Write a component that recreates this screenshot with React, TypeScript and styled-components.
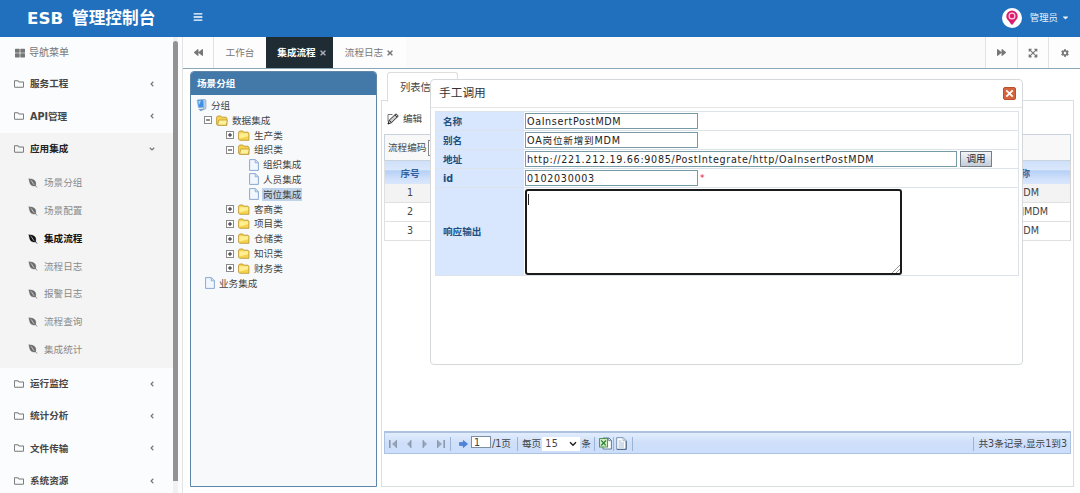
import React from 'react';
import styled, { createGlobalStyle, css } from 'styled-components';
import {
  FaAngleDown,
  FaAngleLeft,
  FaBackward,
  FaBars,
  FaCaretDown,
  FaCog,
  FaEnvira,
  FaExpandArrowsAlt,
  FaForward,
  FaRegFolder,
  FaThLarge,
  FaTimes,
} from 'react-icons/fa';

const GlobalStyle = createGlobalStyle`
  * { box-sizing: border-box; }
  body {
    margin: 0;
    background: #fff;
    color: #444;
    font: 9.6px/1.2 "DejaVu Sans", "Noto Sans CJK SC", sans-serif;
  }
  input, button, textarea { font-family: inherit; font-size: inherit; margin: 0; }
`;

/* ---------- shell ---------- */
const Page = styled.div`
  width: 1080px;
  height: 493px;
  display: flex;
  flex-direction: column;
  overflow: hidden;
`;
const Header = styled.header`
  height: 37px;
  flex: none;
  background: #2170bd;
  color: #fff;
  display: flex;
  align-items: center;
`;
const Brand = styled.h1`
  margin: 0;
  width: 182px;
  padding: 0 0 2px 27px;
  font-size: 16.7px;
  line-height: 20px;
  word-spacing: 3px;
  white-space: nowrap;
`;
const MenuToggle = styled.div`
  margin: -4px 0 0 11px;
  flex: 1;
  display: flex;
`;
const Account = styled.div`
  display: flex;
  align-items: center;
  gap: 8px;
  padding-right: 10px;
  margin-top: -2px;
`;
const AccountName = styled.span`
  display: flex;
  align-items: center;
  gap: 3px;
  font-size: 9.4px;
  color: #eaf2fa;
`;
const Body = styled.div`
  flex: 1;
  min-height: 0;
  display: flex;
`;

/* ---------- sidebar ---------- */
const Sidebar = styled.aside`
  width: 183px;
  flex: none;
  display: flex;
  background: #fafcfd;
  border-right: 1px solid #e3e3e3;
`;
const Nav = styled.nav`
  width: 173px;
  overflow: hidden;
`;
const Track = styled.div`
  width: 5px;
  height: 456px;
  padding-top: 4px;
  background: #f1f1f3;
`;
const Thumb = styled.div`
  height: 440px;
  border-radius: 3px 3px 0 0;
  background: #929294;
`;
const NavTitle = styled.div`
  height: 31px;
  display: flex;
  align-items: center;
  gap: 4px;
  padding-left: 15px;
  font-size: 10px;
  color: #777;
`;
const NavItem = styled.div<{ $open?: boolean }>`
  height: 32.3px;
  display: flex;
  align-items: center;
  gap: 6px;
  padding: 0 17px 0 14px;
  font-weight: bold;
  color: ${(p) => (p.$open ? '#222' : '#454545')};
  svg { color: #777; }
`;
const NavLabel = styled.span`
  flex: 1;
`;
const NavGroup = styled.div`
  background: #f4f4f4;
  height: 235px;
`;
const SubItem = styled.div<{ $active?: boolean }>`
  height: 27.7px;
  display: flex;
  align-items: center;
  gap: 6px;
  padding: 9px 0 0 28px;
  color: ${(p) => (p.$active ? '#111' : '#8a8a8a')};
  font-weight: ${(p) => (p.$active ? 'bold' : 'normal')};
  svg {
    color: ${(p) => (p.$active ? '#111' : '#6c6c6c')};
    stroke: currentColor;
    stroke-width: 8px;
  }
`;

/* ---------- main ---------- */
const Main = styled.main`
  flex: 1;
  min-width: 0;
  display: flex;
  flex-direction: column;
`;
const TabBar = styled.div`
  height: 32px;
  flex: none;
  display: flex;
  background: #fafafa;
  border-bottom: 1px solid #88a7b8;
  color: #666;
`;
const TabButton = styled.div<{ $w: number; $active?: boolean; $side?: 'left' | 'right' }>`
  width: ${(p) => p.$w}px;
  display: flex;
  align-items: center;
  justify-content: center;
  gap: 3px;
  background: #fdfdfd;
  color: #777;
  ${(p) => p.$side === 'left' && css`border-right: 1px solid #e2e2e2;`}
  ${(p) => p.$side === 'right' && css`border-left: 1px solid #e2e2e2;`}
  ${(p) => p.$active && css`padding-left: 5px; background: #1f2c33; color: #fff; font-weight: bold; svg { color: #aab; }`}
`;
const Spacer = styled.div`
  flex: 1;
`;
const Workspace = styled.div`
  flex: 1;
  display: flex;
  padding: 2px 6px 6px 7px;
  position: relative;
`;

/* ---------- tree ---------- */
const TreePanel = styled.section`
  width: 187px;
  height: 416px;
  border: 1px solid #5f86a8;
  border-radius: 4px 4px 0 0;
  background: #f8f9fb;
  overflow: hidden;
`;
const TreeTitle = styled.div`
  height: 23px;
  padding: 1px 0 0 6px;
  display: flex;
  align-items: center;
  background: #4379a9;
  color: #fff;
  font-weight: bold;
`;
const TreeBody = styled.div`
  padding: 3px 0 0 5px;
`;
const TreeRow = styled.div<{ $indent: number }>`
  height: 14.82px;
  display: flex;
  align-items: center;
  padding-left: ${(p) => p.$indent}px;
  gap: 4px;
  svg { flex: none; }
`;
const TreeLabel = styled.span<{ $selected?: boolean }>`
  padding: 1px;
  margin-left: -1px;
  line-height: 11px;
  background: ${(p) => (p.$selected ? '#bfd3ea' : 'none')};
`;

/* ---------- list ---------- */
const ListArea = styled.section`
  margin-left: 4px;
  width: 693px;
  display: flex;
  flex-direction: column;
`;
const ListTabs = styled.div`
  height: 29px;
  padding: 1px 0 0 6px;
`;
const ListTab = styled.div`
  width: 71px;
  height: 30px;
  position: relative;
  border: 1px solid #ddd;
  border-bottom: 0;
  border-radius: 3px 3px 0 0;
  background: #fff;
  display: flex;
  align-items: center;
  padding-left: 12px;
  font-size: 10.3px;
`;
const ListBody = styled.div`
  height: 387px;
  border: 1px solid #d9dfe0;
  padding: 0 1px 0 2px;
  display: flex;
  flex-direction: column;
`;
const Toolbar = styled.div`
  height: 33px;
  display: flex;
  align-items: center;
  gap: 4px;
  padding: 3px 0 0 3px;
`;
const SearchRow = styled.div`
  height: 27px;
  display: flex;
  align-items: center;
  gap: 2px;
  padding-left: 3px;
  border: 1px solid #c9d3dd;
  background: #f8f8f8;
  margin-right: 1px;
`;
const SearchBox = styled.input`
  width: 100px;
  height: 16px;
  border: 1px solid #888;
`;
const Grid = styled.div`
  width: 687px;
  border-left: 1px solid #e0e0e0;
  border-right: 1px solid #d5d5d5;
`;
const GridRow = styled.div<{ $kind?: 'head' | 'odd' }>`
  display: flex;
  height: 19px;
  align-items: center;
  border-bottom: 1px solid #e0e0e0;
  background: ${(p) => (p.$kind === 'odd' ? '#f3f3f3' : '#fff')};
  ${(p) =>
    p.$kind === 'head' &&
    css`
      height: 23px;
      padding-top: 2px;
      border: 0;
      color: #33639c;
      font-weight: bold;
      background: linear-gradient(#cfe0fa, #dbe8fc 40%, #b4cff6 42%, #cfe0fb 75%, #d9e7fc);
    `}
`;
const IndexCell = styled.div`
  width: 50px;
  text-align: center;
`;
const NameCell = styled.div<{ $right: number }>`
  flex: 1;
  text-align: right;
  padding-right: ${(p) => p.$right}px;
`;

/* ---------- pager ---------- */
const Pager = styled.footer`
  margin: auto 1px 32px 0;
  height: 23px;
  flex: none;
  display: flex;
  align-items: center;
  padding: 1px 3px 0 3px;
  border: 1px solid #adc2de;
  border-top-width: 2px;
  background: linear-gradient(#e2edfd, #cfdff9 50%, #cbdefc);
`;
const PagerIcons = styled.div`
  display: flex;
  gap: 6px;
  width: 62px;
`;
const Divider = styled.i<{ $before: number; $after: number }>`
  width: 1px;
  height: 14px;
  background: #9cb4d4;
  margin: 0 ${(p) => p.$after}px 0 ${(p) => p.$before}px;
`;
const PageInput = styled.input`
  width: 20px;
  height: 12px;
  margin: -3px 1px 0 3px;
  padding: 0 2px;
  border: 1px solid #7d8ea0;
  color: #444;
`;
const PageSize = styled.div`
  width: 38px;
  height: 14px;
  margin: 1px 1px 0 1px;
  padding: 0 3px;
  background: #fff;
  display: flex;
  align-items: center;
  justify-content: space-between;
  letter-spacing: 0.4px;
`;

/* ---------- dialog ---------- */
const Dialog = styled.div`
  position: absolute;
  left: 247px;
  top: 10px;
  width: 593px;
  height: 286px;
  background: #fff;
  border: 1px solid #d6d9dc;
  border-radius: 4px;
  padding: 0 3px 0 4px;
`;
const DialogHead = styled.div`
  height: 28px;
  margin: 0 -3px 3px -4px;
  padding: 0 6px 1px 8px;
  display: flex;
  align-items: center;
  justify-content: space-between;
  border-bottom: 1px solid #e6e6e6;
  font-size: 11.7px;
  color: #333;
`;
const Form = styled.div`
  border: 1px solid #dde3e8;
  border-bottom: 0;
`;
const FormRow = styled.label<{ $h: number }>`
  height: ${(p) => p.$h}px;
  display: flex;
  border-bottom: 1px solid #dde3ea;
`;
const FormLabel = styled.span`
  width: 88px;
  padding: 1px 0 0 7px;
  display: flex;
  align-items: center;
  background: #d8e7fd;
  color: #214f7f;
  font-weight: bold;
`;
const FormField = styled.span`
  flex: 1;
  display: flex;
  align-items: center;
  padding-left: 1px;
  gap: 3px;
`;
const TextInput = styled.input<{ $w: number; $spacing?: number }>`
  width: ${(p) => p.$w}px;
  height: 16px;
  padding: 0 1px;
  border: 1px solid #769ba6;
  color: #222;
  letter-spacing: ${(p) => p.$spacing ?? 0.67}px;
`;
const Required = styled.em`
  color: #e02020;
  font-style: normal;
  font-size: 9px;
  margin-left: -1px;
`;
const InvokeButton = styled.button`
  width: 32px;
  height: 16px;
  padding: 0;
  line-height: 12px;
  border: 1px solid #73808c;
  background: linear-gradient(#f3f5f7, #c3ccd6);
  color: #222;
`;
const Output = styled.div`
  width: 377px;
  height: 86px;
  padding: 3px 1px;
  border: 2px solid #1b1b1b;
  border-radius: 3px;
  background: #fff;
  display: flex;
  justify-content: space-between;
`;
const Caret = styled.i`
  width: 1px;
  height: 11px;
  background: #222;
`;
const Grip = styled.svg`
  align-self: flex-end;
  margin: 0 -1px -3px 0;
`;

/* ---------- drawings ---------- */
const Pin = () => (
  <svg width="20" height="20" viewBox="0 0 20 20">
    <circle cx="10" cy="10" r="10" fill="#fff" />
    <path d="M10 2.6a5.7 5.7 0 0 0-5.7 5.7c0 3.4 3.4 4.8 4.8 8.2h1.8c1.4-3.4 4.8-4.8 4.8-8.2A5.7 5.7 0 0 0 10 2.6z" fill="#dc1d6e" />
    <circle cx="10" cy="8" r="2.9" fill="#dc1d6e" stroke="#fbd3e2" strokeWidth="1.2" />
  </svg>
);
const Computer = () => (
  <svg width="11" height="13" viewBox="0 0 11 13">
    <path d="M1 1l6-.8 1 8L2.5 9z" fill="#3d8fe8" stroke="#9dbde0" strokeWidth=".7" />
    <path d="M7.3.3L10 1v8.5L7.5 11z" fill="#b8cbe3" stroke="#7894b8" strokeWidth=".5" />
    <path d="M2.5 10.2l4-.8 1 1.5-3 1.4z" fill="#7f9fc6" />
    <path d="M2.2 2l3-.5L3 6z" fill="#a5d4fb" />
  </svg>
);
const Expander = ({ open }: { open?: boolean }) => (
  <svg width="8" height="8" viewBox="0 0 8 8">
    <rect x=".5" y=".5" width="7" height="7" fill="#fff" stroke="#8a8a8a" />
    <path d={open ? 'M2 4h4' : 'M2 4h4M4 2v4'} stroke="#222" />
  </svg>
);
const Folder = ({ open }: { open?: boolean }) => (
  <svg width="12" height="11" viewBox="0 0 12 11">
    <path d="M.6 9.2V2.2L1.6 1h3.2l1 1.2H10l.9.9v7.2H1.6z" fill="#f6d34e" stroke="#b7902b" strokeWidth=".8" />
    {open ? (
      <path d="M2.8 5h8.6l-1.2 5.2H1.6z" fill="#fff19a" stroke="#b7902b" strokeWidth=".7" />
    ) : (
      <path d="M1.3 3.3h8.8v2.9l-8.8 2.4z" fill="#ffee92" />
    )}
  </svg>
);
const Doc = () => (
  <svg width="10" height="12" viewBox="0 0 10 12">
    <path d="M.6.6h5.8l3 3v7.8H.6z" fill="#f1f7ff" stroke="#7f9fc8" strokeWidth=".9" />
    <path d="M6.2.8v3h3" fill="#c9dcf5" stroke="#7f9fc8" strokeWidth=".7" />
  </svg>
);
const Pencil = () => (
  <svg width="12" height="12" viewBox="0 0 12 12">
    <path d="M5.5 1.5H1v7" fill="none" stroke="#777" />
    <path d="M1 11l1.2-3.8L9 .8 11.3 3 4.6 9.6z" fill="#ccc" stroke="#333" />
    <path d="M7.8 1.9l2.4 2.3M2.2 7.2l2.4 2.4" stroke="#333" />
    <path d="M.8 11.2l.7-2 1.4 1.3z" fill="#222" />
  </svg>
);
const CloseBox = () => (
  <svg width="13" height="13" viewBox="0 0 13 13">
    <rect x=".5" y=".5" width="12" height="12" rx="1.5" fill="#d6643d" stroke="#b9502f" />
    <path d="M3.3 3.3l6.4 6.4M9.7 3.3L3.3 9.7" stroke="#fff" strokeWidth="1.7" />
  </svg>
);
const Step = ({ flip, bar }: { flip?: boolean; bar?: boolean }) => (
  <svg width="10" height="10" viewBox="0 0 10 10">
    <g transform={flip ? 'translate(10 0) scale(-1 1)' : undefined}>
      <path d={bar ? 'M8.5 1v8L4 5z' : 'M7 1v8L3 5z'} fill="#96a5b8" />
      <path d={bar ? 'M8.5 1v8' : 'M7 1v8'} stroke="#7b8798" strokeWidth=".7" />
      {bar && <path d="M1.8 1v8" stroke="#8694a8" strokeWidth="1.5" />}
    </g>
  </svg>
);
const GoArrow = () => (
  <svg width="9" height="8" viewBox="0 0 9 8">
    <path d="M.5 2.5h3.8V.4L8.6 4 4.3 7.6V5.5H.5z" fill="#4b84dc" stroke="#2f62b8" strokeWidth=".5" />
  </svg>
);
const SheetIcon = ({ excel }: { excel?: boolean }) => (
  <svg width={excel ? 13 : 11} height="13" viewBox={excel ? '0 0 13 13' : '0 0 11 13'}>
    {excel ? (
      <>
        <path d="M4 1h6l2.4 2.4V12H4z" fill="#fff" stroke="#55708c" strokeWidth=".9" />
        <path d="M9.7 1v2.7h2.7" fill="none" stroke="#55708c" strokeWidth=".8" />
        <rect x=".6" y="1.6" width="8" height="8.4" fill="#d9efd0" stroke="#3f8a3b" strokeWidth=".9" />
        <path d="M2.2 3.4l4.6 5M7 3.4l-4.8 5" stroke="#2d8430" strokeWidth="1.4" />
      </>
    ) : (
      <>
        <path d="M.7.7h6.5l3 3v8.6H.7z" fill="#fff" stroke="#6c88a8" strokeWidth=".9" />
        <path d="M10.2 4v8.4H1" fill="none" stroke="#4d6785" strokeWidth="1" />
        <path d="M7 .8v3h3M2.5 4h3M2.5 6h5.5M2.5 8h5.5M2.5 10h5.5" fill="none" stroke="#8fa9c6" strokeWidth=".8" />
      </>
    )}
  </svg>
);
const Chevron = () => (
  <svg width="8" height="6" viewBox="0 0 8 6">
    <path d="M1 1.2l3 3 3-3" fill="none" stroke="#222" strokeWidth="1.5" />
  </svg>
);

const subItems = ['场景分组', '场景配置', '集成流程', '流程日志', '报警日志', '流程查询', '集成统计'];
const closedCategories = ['客商类', '项目类', '仓储类', '知识类', '财务类'];

const MenuEntry = ({ label, open }: { label: string; open?: boolean }) => (
  <NavItem $open={open}>
    <FaRegFolder size={10} />
    <NavLabel>{label}</NavLabel>
    {open ? <FaAngleDown size={8} /> : <FaAngleLeft size={8} />}
  </NavItem>
);

const Category = ({ label, open, indent = 24 }: { label: string; open?: boolean; indent?: number }) => (
  <TreeRow $indent={indent + 6}>
    <Expander open={open} />
    <Folder open={open} />
    <TreeLabel>{label}</TreeLabel>
  </TreeRow>
);

const Leaf = ({ label, indent = 53, selected }: { label: string; indent?: number; selected?: boolean }) => (
  <TreeRow $indent={indent}>
    <Doc />
    <TreeLabel $selected={selected}>{label}</TreeLabel>
  </TreeRow>
);

export default function App() {
  return (
    <Page>
      <GlobalStyle />
      <Header>
        <Brand>ESB 管理控制台</Brand>
        <MenuToggle><FaBars size={10} /></MenuToggle>
        <Account>
          <Pin />
          <AccountName>管理员 <FaCaretDown size={9} /></AccountName>
        </Account>
      </Header>
      <Body>
        <Sidebar>
          <Nav>
            <NavTitle><FaThLarge size={10} />导航菜单</NavTitle>
            <MenuEntry label="服务工程" />
            <MenuEntry label="API管理" />
            <NavGroup>
              <MenuEntry label="应用集成" open />
              {subItems.map((name) => (
                <SubItem key={name} $active={name === '集成流程'}>
                  <FaEnvira size={10} />
                  {name}
                </SubItem>
              ))}
            </NavGroup>
            <MenuEntry label="运行监控" />
            <MenuEntry label="统计分析" />
            <MenuEntry label="文件传输" />
            <MenuEntry label="系统资源" />
          </Nav>
          <Track><Thumb /></Track>
        </Sidebar>
        <Main>
          <TabBar>
            <TabButton $w={31} $side="left"><FaBackward size={9} /></TabButton>
            <TabButton $w={52}>工作台</TabButton>
            <TabButton $w={67} $active>集成流程<FaTimes size={8} /></TabButton>
            <TabButton $w={73}>流程日志<FaTimes size={8} /></TabButton>
            <Spacer />
            <TabButton $w={32} $side="right"><FaForward size={9} /></TabButton>
            <TabButton $w={31} $side="right"><FaExpandArrowsAlt size={10} /></TabButton>
            <TabButton $w={32} $side="right"><FaCog size={8} /></TabButton>
          </TabBar>
          <Workspace>
            <TreePanel>
              <TreeTitle>场景分组</TreeTitle>
              <TreeBody>
                <TreeRow $indent={0}><Computer /><TreeLabel>分组</TreeLabel></TreeRow>
                <Category label="数据集成" open indent={2} />
                <Category label="生产类" />
                <Category label="组织类" open />
                <Leaf label="组织集成" />
                <Leaf label="人员集成" />
                <Leaf label="岗位集成" selected />
                {closedCategories.map((name) => <Category key={name} label={name} />)}
                <Leaf label="业务集成" indent={9} />
              </TreeBody>
            </TreePanel>
            <ListArea>
              <ListTabs><ListTab>列表信息</ListTab></ListTabs>
              <ListBody>
                <Toolbar><Pencil />编辑</Toolbar>
                <SearchRow>流程编码<SearchBox readOnly /></SearchRow>
                <Grid>
                  <GridRow $kind="head"><IndexCell>序号</IndexCell><NameCell $right={40}>名称</NameCell></GridRow>
                  <GridRow $kind="odd"><IndexCell>1</IndexCell><NameCell $right={31}>新增到MDM</NameCell></GridRow>
                  <GridRow><IndexCell>2</IndexCell><NameCell $right={22}>OA岗位新增到MDM</NameCell></GridRow>
                  <GridRow><IndexCell>3</IndexCell><NameCell $right={31}>新增到MDM</NameCell></GridRow>
                </Grid>
                <Pager>
                  <PagerIcons><Step bar /><Step /><Step flip /><Step flip bar /></PagerIcons>
                  <Divider $before={0} $after={8} />
                  <GoArrow />
                  <PageInput readOnly value="1" />/1页
                  <Divider $before={6} $after={4} />
                  每页
                  <PageSize>15<Chevron /></PageSize>
                  条
                  <Divider $before={3} $after={4} />
                  <SheetIcon excel />
                  <Divider $before={1} $after={2} />
                  <SheetIcon />
                  <Divider $before={5} $after={0} />
                  <Spacer />
                  <Divider $before={0} $after={4} />
                  共3条记录,显示1到3
                </Pager>
              </ListBody>
            </ListArea>
            <Dialog>
              <DialogHead>手工调用<CloseBox /></DialogHead>
              <Form>
                <FormRow $h={19}><FormLabel>名称</FormLabel><FormField><TextInput $w={173} $spacing={0.62} readOnly value="OaInsertPostMDM" /></FormField></FormRow>
                <FormRow $h={19}><FormLabel>别名</FormLabel><FormField><TextInput $w={173} $spacing={0.8} readOnly value="OA岗位新增到MDM" /></FormField></FormRow>
                <FormRow $h={19}>
                  <FormLabel>地址</FormLabel>
                  <FormField>
                    <TextInput $w={432} $spacing={0.69} readOnly value="http://221.212.19.66:9085/PostIntegrate/http/OaInsertPostMDM" />
                    <InvokeButton>调用</InvokeButton>
                  </FormField>
                </FormRow>
                <FormRow $h={19}><FormLabel>id</FormLabel><FormField><TextInput $w={173} readOnly value="0102030003" /><Required>*</Required></FormField></FormRow>
                <FormRow $h={88}>
                  <FormLabel>响应输出</FormLabel>
                  <FormField>
                    <Output>
                      <Caret />
                      <Grip width="8" height="8" viewBox="0 0 8 8"><path d="M0 8l8-8M4 8l4-4" stroke="#999" /></Grip>
                    </Output>
                  </FormField>
                </FormRow>
              </Form>
            </Dialog>
          </Workspace>
        </Main>
      </Body>
    </Page>
  );
}
